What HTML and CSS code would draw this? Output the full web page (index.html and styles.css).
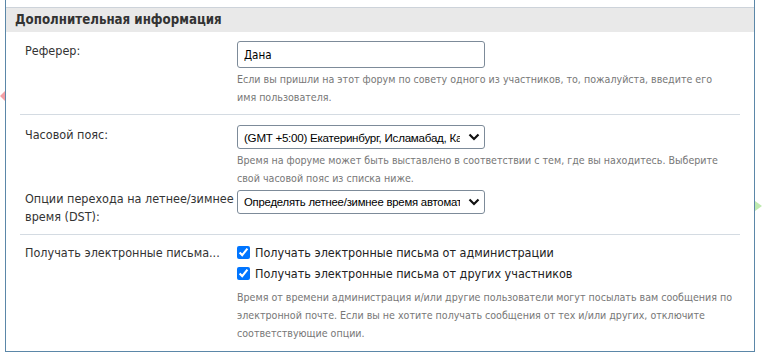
FILE: index.html
```html
<!DOCTYPE html>
<html lang="ru">
<head>
  <meta charset="utf-8">
  <title>Дополнительная информация</title>
  <link rel="stylesheet" href="styles.css">
</head>
<body>
  <span class="deco deco-red"></span>
  <span class="deco deco-green"></span>

  <div class="panel">
    <h3 class="panel-head">Дополнительная информация</h3>

    <div class="group first">
      <div class="row">
        <div class="label">Реферер:</div>
        <div class="field">
          <input class="text-input" type="text" value="Дана">
          <p class="hint">Если вы пришли на этот форум по совету одного из участников, то, пожалуйста, введите его<br>имя пользователя.</p>
        </div>
      </div>
    </div>

    <div class="group">
      <div class="row">
        <div class="label">Часовой пояс:</div>
        <div class="field">
          <span class="select-wrap">
            <select class="select tz">
              <option>(GMT +5:00) Екатеринбург, Исламабад, Карачи, Ташкент</option>
            </select>
            <svg class="chev" width="12" height="8" viewBox="0 0 12 8"><path d="M1.5 1.5 L6 6 L10.5 1.5" fill="none" stroke="#111" stroke-width="2.2"/></svg>
          </span>
          <p class="hint">Время на форуме может быть выставлено в соответствии с тем, где вы находитесь. Выберите свой часовой пояс из списка ниже.</p>
        </div>
      </div>
      <div class="row row-dst">
        <div class="label">Опции перехода на летнее/зимнее время (DST):</div>
        <div class="field">
          <span class="select-wrap">
            <select class="select dst">
              <option>Определять летнее/зимнее время автоматически</option>
            </select>
            <svg class="chev" width="12" height="8" viewBox="0 0 12 8"><path d="M1.5 1.5 L6 6 L10.5 1.5" fill="none" stroke="#111" stroke-width="2.2"/></svg>
          </span>
        </div>
      </div>
    </div>

    <div class="group last">
      <div class="row">
        <div class="label">Получать электронные письма...</div>
        <div class="field">
          <label class="check"><input type="checkbox" checked> Получать электронные письма от администрации</label>
          <label class="check"><input type="checkbox" checked> Получать электронные письма от других участников</label>
          <p class="hint">Время от времени администрация и/или другие пользователи могут посылать вам сообщения по электронной почте. Если вы не хотите получать сообщения от тех и/или других, отключите соответствующие опции.</p>
        </div>
      </div>
    </div>
  </div>
</body>
</html>
```

FILE: styles.css
```css
html {
  font-family: "DejaVu Sans Condensed", "Liberation Sans", sans-serif;
}
body {
  margin: 0;
  background: #fff;
  color: #333;
  position: relative;
}
.deco {
  position: absolute;
  width: 0;
  height: 0;
  border-top: 5px solid transparent;
  border-bottom: 5px solid transparent;
}
.deco-red {
  left: 0;
  top: 91px;
  border-right: 5px solid #f4a0a6;
}
.deco-green {
  left: 755px;
  top: 201px;
  border-left: 7px solid #bfeab0;
}
.panel {
  margin-left: 5px;
  width: 748px;
  padding-top: 7px;
  border-left: 1px solid #5b87a8;
  border-right: 1px solid #5b87a8;
  border-bottom: 1px solid #5b87a8;
  padding-bottom: 9px;
}
.panel-head {
  margin: 0;
  height: 24px;
  line-height: 24px;
  padding-left: 9px;
  font-size: 13.2px;
  font-weight: bold;
  color: #333;
  background: #e9e9e9;
  border-top: 1px solid #cdd3da;
}
.group {
  margin: 0 14px;
  padding: 10px 0 8px;
  border-bottom: 1px solid #d4dbe2;
}
.group.first {
  padding-top: 9px;
}
.group.last {
  padding-top: 7px;
  padding-bottom: 0;
  border-bottom: none;
}
.row {
  display: flex;
}
.row-dst {
  margin-top: 3px;
}
.label {
  width: 212px;
  padding-left: 5px;
  padding-top: 1px;
  font-size: 12.5px;
  line-height: 18px;
}
.row-dst .label {
  padding-top: 0;
}
.last .label {
  padding-top: 2px;
}
.field {
  flex: 1;
}
.text-input {
  box-sizing: border-box;
  width: 248px;
  height: 27px;
  margin: 0;
  padding: 0 6px;
  border: 1px solid #7d8b99;
  border-radius: 3px;
  font-family: inherit;
  font-size: 11.5px;
  color: #000;
}
.hint {
  margin: 2px 0 0;
  font-size: 10.6px;
  line-height: 18px;
  color: #777;
}
.last .hint {
  margin-top: 4px;
}
.select-wrap {
  position: relative;
  display: inline-block;
}
.select {
  appearance: none;
  box-sizing: border-box;
  width: 248px;
  height: 24px;
  margin: 0;
  padding: 0 24px 0 6px;
  border: 1px solid #7d8b99;
  border-radius: 3px;
  background: #fff;
  font-family: "Liberation Sans", sans-serif;
  color: #000;
}
.select.tz {
  font-size: 11.6px;
  letter-spacing: -0.25px;
}
.select.dst {
  font-size: 11.3px;
  letter-spacing: -0.2px;
}
.chev {
  position: absolute;
  right: 5px;
  top: 8px;
  pointer-events: none;
}
.check {
  display: flex;
  align-items: center;
  height: 21px;
  font-size: 12.5px;
  color: #222;
}
.check input {
  width: 13px;
  height: 13px;
  margin: 0 5px 0 0;
}
```
